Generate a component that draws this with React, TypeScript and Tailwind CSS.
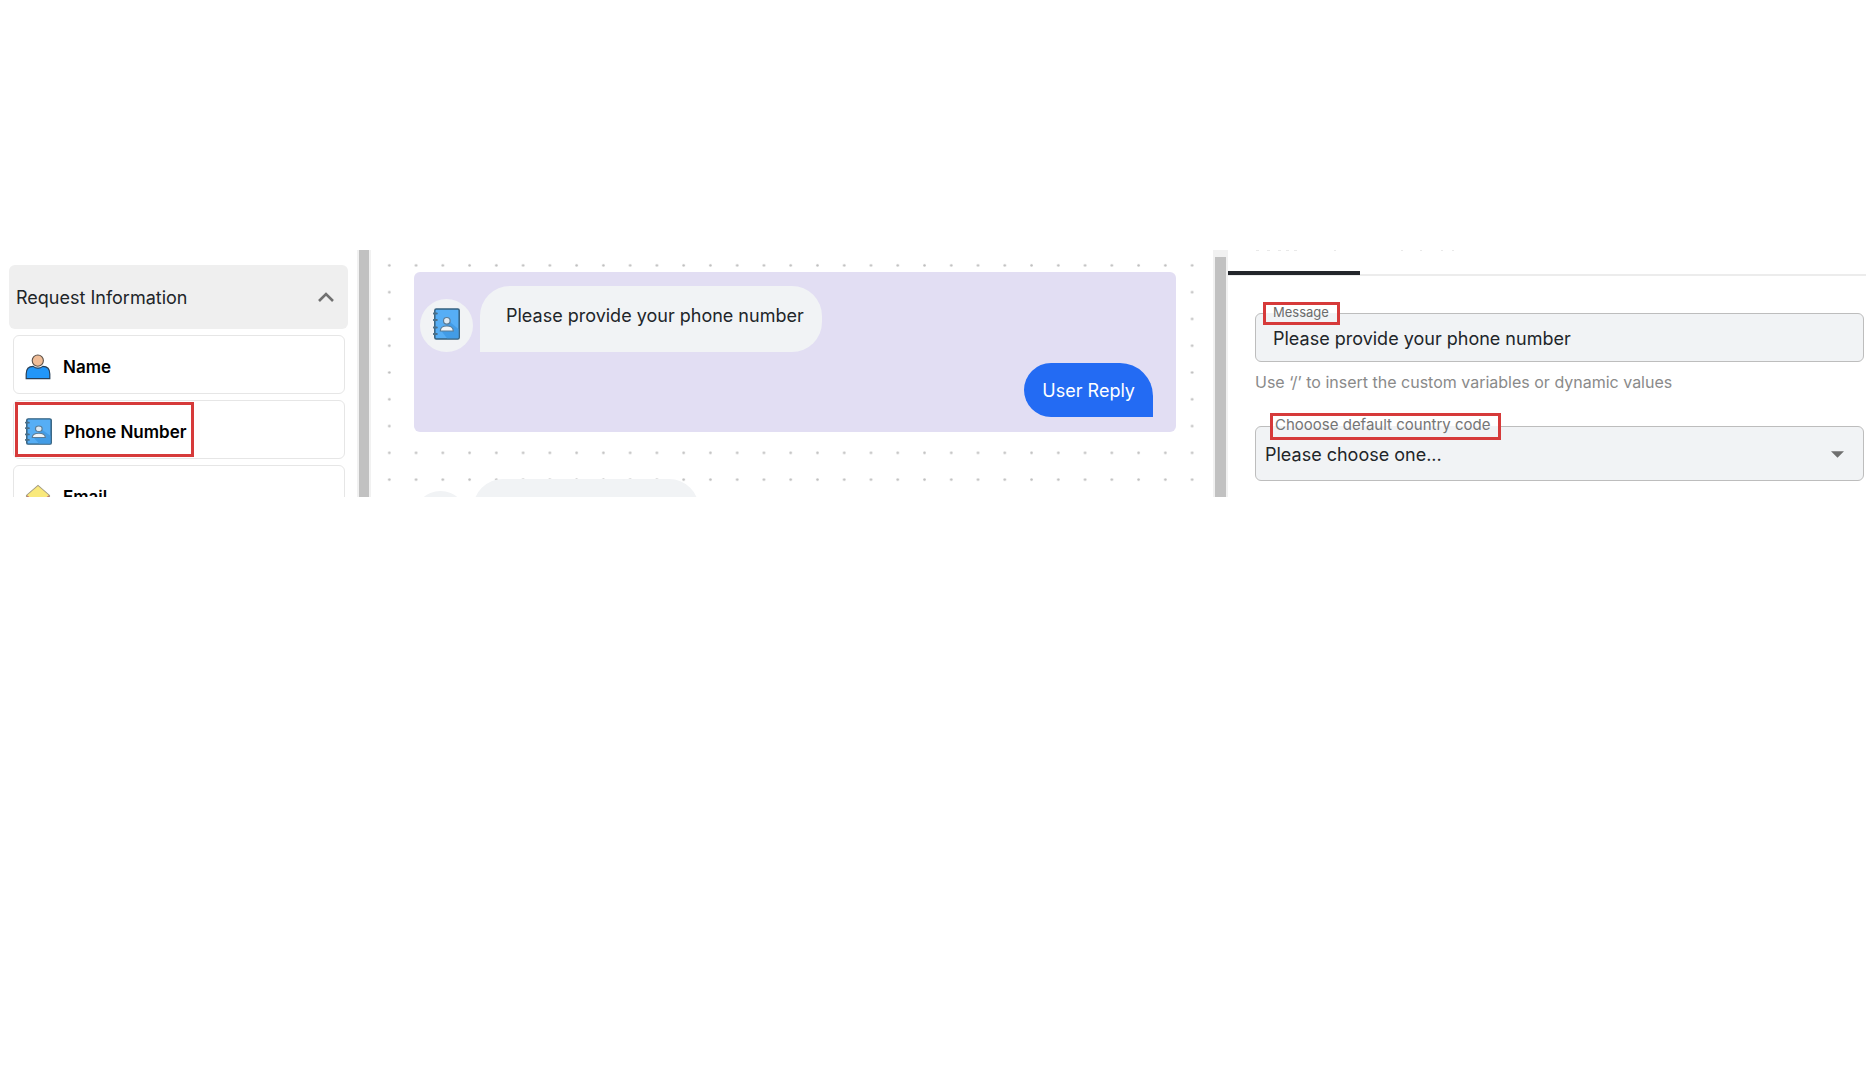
import React from "react";

function AddressBook({ className }: { className: string }) {
  return (
    <svg viewBox="0 0 27 32" preserveAspectRatio="none" className={className} aria-hidden="true">
      <rect x="1.8" y="1" width="24.4" height="30" rx="1.5" fill="#56aef5" stroke="#35617f" strokeWidth="1.5" />
      <path d="M17 14 25.400 21V30.200H14L8 22.500Z" fill="#429ce6" />
      <path d="M0.6 5.5H3.800M0.6 12H3.800M0.6 19.500H3.800M0.6 26H3.800" stroke="#4b6f88" strokeWidth="2" strokeLinecap="round" />
      <circle cx="13.800" cy="12.800" r="3.300" fill="#dfeaf3" stroke="#5b7c96" strokeWidth="1.200" />
      <path d="M7.300 23c0-3.600 2.800-5 6.500-5s6.500 1.400 6.500 5z" fill="#f1f5f8" stroke="#5b7c96" strokeWidth="1.200" />
    </svg>
  );
}

function PersonIcon() {
  return (
    <svg viewBox="0 0 26 26" className="h-[26px] w-[26px]" aria-hidden="true">
      <path d="M1.2 24.6V20c0-5 3-7.6 7-7.6 1.4 1.2 3 1.700 4.800 1.700s3.400-.5 4.800-1.700c4 0 7 2.600 7 7.600v4.600z" fill="#2196f8" stroke="#263f58" strokeWidth="1.2" />
      <circle cx="12.800" cy="6.600" r="5.600" fill="#f0bd98" stroke="#5d5148" strokeWidth="1.100" />
    </svg>
  );
}

function EnvelopeIcon() {
  return (
    <svg viewBox="0 0 26 26" className="h-[26px] w-[26px]" aria-hidden="true">
      <path d="M1.500 11.500 13 1.500 24.500 11.500v13h-23z" fill="#c9776a" stroke="#a39f86" strokeWidth="1.100" />
      <path d="M2.200 11.300 13 2l10.800 9.300L13 20z" fill="#f9e97c" />
    </svg>
  );
}

function Card({ icon, label, marked }: { icon: React.ReactNode; label: string; marked?: boolean }) {
  return (
    <button className="flex h-[59px] w-full shrink-0 items-center rounded-md border border-[#e6e6e6] bg-white p-px text-left text-[17px] font-semibold text-black">
      <span className={marked ? "flex h-[55px] items-center gap-3 border-3 border-[#d63a3a] pt-1 pr-1 pl-[7px]" : "flex h-[55px] items-center gap-3 pt-1 pr-2 pl-2.5"}>
        {icon}
        <span className="pt-0.5">{label}</span>
      </span>
    </button>
  );
}

function DotGrid() {
  return (
    <svg className="absolute inset-0 h-full w-full" aria-hidden="true">
      <defs>
        <pattern id="dots" x="4.900" y="2" width="26.760" height="26.780" patternUnits="userSpaceOnUse">
          <circle cx="13.400" cy="13.400" r="1.300" fill="#bdbdbd" />
        </pattern>
      </defs>
      <rect width="100%" height="100%" fill="url(#dots)" />
    </svg>
  );
}

export default function App() {
  return (
    <div className="min-h-screen bg-white pt-[250px] font-['Inter',sans-serif] text-[#212529]">
      <main className="flex h-[247px] overflow-hidden">
        <aside className="flex w-[356px] shrink-0 flex-col gap-1.5 overflow-hidden pt-[15px] pr-2 pl-[9px]">
          <button className="flex h-16 shrink-0 items-center justify-between rounded-md bg-[#efefef] pr-[13px] pl-[7px] text-lg">
            <span className="pt-0.5">Request Information</span>
            <svg viewBox="0 0 18 12" className="h-3 w-[18px]" fill="none" stroke="#707070" strokeWidth="2.600" aria-hidden="true">
              <path d="M2 10 9 3l7 7" />
            </svg>
          </button>
          <div className="flex flex-col gap-1.5 pr-[3px] pl-1">
            <Card icon={<PersonIcon />} label="Name" />
            <Card icon={<AddressBook className="h-[27px] w-[27px]" />} label="Phone Number" marked />
            <Card icon={<EnvelopeIcon />} label="Email" />
          </div>
        </aside>
        <div className="w-[15px] shrink-0 bg-white px-px">
          <div className="h-full w-3.5 border-x-2 border-[#f1f1f1] bg-[#c1c1c1]" />
        </div>

        <section className="relative min-w-0 flex-1 overflow-hidden">
          <DotGrid />
          <div className="relative flex flex-col pt-[22px] pr-[37px] pl-[43px]">
            <div className="flex h-40 flex-col rounded-md bg-[#e2def3] pt-3.5 pr-[23px] pl-1.5">
              <div className="flex items-end gap-[7px]">
                <div className="flex size-[53px] shrink-0 items-center justify-center rounded-full bg-[#f1f3f5] pb-1">
                  <AddressBook className="h-8 w-[27px]" />
                </div>
                <p className="h-[66px] rounded-[30px] rounded-bl-none bg-[#f1f3f5] pt-4 pr-[18px] pl-[26px] text-lg">Please provide your phone number</p>
              </div>
              <button className="mt-[11px] h-[54px] self-end rounded-l-[27px] rounded-tr-[33px] bg-[#236bf3] px-[18px] pt-0.5 text-lg text-white">User Reply</button>
            </div>
            <div className="mt-[47px] flex items-start gap-1.5">
              <div className="mt-3 size-[53px] shrink-0 rounded-full bg-[#f1f3f5]" />
              <div className="h-[66px] w-[226px] rounded-[30px] rounded-bl-none bg-[#f1f3f5]" />
            </div>
          </div>
        </section>

        <div className="w-[15px] shrink-0 bg-[#f1f1f1] px-0.5 pt-[7px]">
          <div className="h-full bg-[#c1c1c1]" />
        </div>
        <section className="w-[638px] shrink-0">
          <div className="flex h-[26px] flex-col justify-between border-b-2 border-[#ececec]">
            <svg className="h-px w-full" stroke="#e9e9e9" strokeWidth="1" aria-hidden="true">
              <path d="M28 .5h3M39 .5h3M50 .5h3M58 .5h3M66 .5h3M106 .5h2M173 .5h2M192 .5h2M213 .5h2M224 .5h2" />
            </svg>
            <div className="-mb-px h-1 w-[132px] shrink-0 bg-[#23262b]" />
          </div>
          <form className="flex flex-col pt-[37px] pr-0.5 pl-[27px]">
            <div className="relative">
              <label htmlFor="message" className="absolute -top-[11px] left-2 flex h-[23px] items-center border-3 border-[#d63a3a] bg-linear-to-b from-white from-50% to-[#f1f3f5] to-50% pr-2 pb-px pl-[7px] text-[13px] text-[#6b6b6b]">Message</label>
              <input id="message" defaultValue="Please provide your phone number" className="block h-[49px] w-full rounded-md border border-[#bdbdbd] bg-[#f1f3f5] px-[17px] pt-0.5 text-lg outline-none" />
            </div>
            <p className="mt-2 text-base text-[#8a8a8a]">Use ‘/’ to insert the custom variables or dynamic values</p>
            <div className="relative mt-8">
              <label htmlFor="country" className="absolute -top-[13px] left-[15px] flex h-[27px] items-center border-3 border-[#d63a3a] bg-linear-to-b from-white from-50% to-[#f1f3f5] to-50% pr-2 pb-0.5 pl-0.5 text-[15px] text-[#757575]">Chooose default country code</label>
              <select id="country" className="block h-[55px] w-full appearance-none rounded-md border border-[#bdbdbd] bg-[#f1f3f5] px-[9px] pt-0.5 text-lg outline-none">
                <option>Please choose one...</option>
              </select>
              <svg viewBox="0 0 14 7" className="pointer-events-none absolute top-[25px] right-5 h-[7px] w-[13px]" aria-hidden="true">
                <path d="M0 0h14L7 7z" fill="#6f6f6f" />
              </svg>
            </div>
          </form>
        </section>
      </main>
    </div>
  );
}
